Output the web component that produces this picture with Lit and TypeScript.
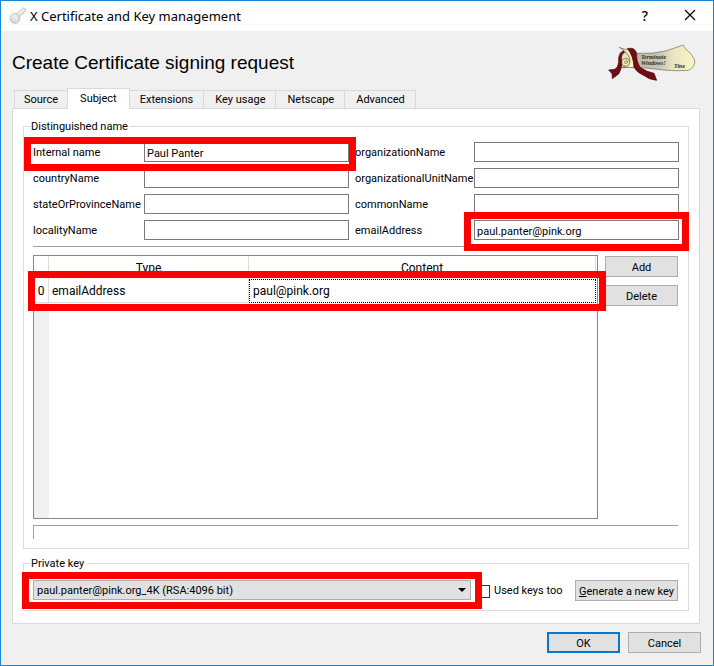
import { LitElement, html, css, svg } from "lit";
import { customElement, state } from "lit/decorators.js";
import { classMap } from "lit/directives/class-map.js";

interface NameField {
  id: string;
  label: string;
  value: string;
  marked?: boolean;
}

const LEFT: NameField[] = [
  { id: "internal", label: "Internal name", value: "Paul Panter", marked: true },
  { id: "country", label: "countryName", value: "" },
  { id: "state", label: "stateOrProvinceName", value: "" },
  { id: "locality", label: "localityName", value: "" },
];

const RIGHT: NameField[] = [
  { id: "org", label: "organizationName", value: "" },
  { id: "unit", label: "organizationalUnitName", value: "" },
  { id: "common", label: "commonName", value: "" },
  { id: "email", label: "emailAddress", value: "paul.panter@pink.org", marked: true },
];

const TABS = ["Source", "Subject", "Extensions", "Key usage", "Netscape", "Advanced"];

const keyIcon = svg`
  <svg width="18" height="18" viewBox="0 0 18 18" aria-hidden="true">
    <path d="M14.5 0.8 L17 2 L16.4 4.6 L14.8 5.2 L14.2 7 L12.4 7.6 L10 11 L6.5 7.5 Z" fill="#dedede" stroke="#c6c6c6" stroke-width="0.7"/>
    <path d="M14.8 2.4 L8.5 8.5" stroke="#f8f8f8" stroke-width="1.2"/>
    <circle cx="6" cy="11.5" r="5" fill="#d8d8d8" stroke="#bdbdbd" stroke-width="0.7"/>
    <circle cx="5.6" cy="10.4" r="3.2" fill="#ececec"/>
    <ellipse cx="4.4" cy="13.2" rx="1.7" ry="1.3" fill="#fff" stroke="#a8a8a8" stroke-width="0.6"/>
  </svg>`;

const scrollLogo = svg`
  <svg width="88" height="42" viewBox="54 126 264 126" role="img" aria-label="Certificate scroll">
    <defs>
      <linearGradient id="parchment" x1="0" y1="0" x2="1" y2="0">
        <stop offset="0" stop-color="#f4ecb8"/>
        <stop offset="0.25" stop-color="#bfbda6"/>
        <stop offset="0.5" stop-color="#c4c3b6"/>
        <stop offset="0.72" stop-color="#ebe6c0"/>
        <stop offset="1" stop-color="#fbf5c4"/>
      </linearGradient>
    </defs>
    <path d="M96 203 Q88 182 100 158 L143 160 Q190 162 226 153 Q258 143 280 135 L286 146 Q306 160 314 180 Q316 202 295 211 Q260 214 220 210 L146 202 Z" fill="url(#parchment)" stroke="#6e6a58" stroke-width="2"/>
    <path d="M88 142 Q104 150 118 148 Q134 164 134 203 L98 202 Q122 196 120 178 Q116 158 88 142 Z" fill="#fbf3bb" stroke="#6b664c" stroke-width="2"/>
    <circle cx="107" cy="187" r="12" fill="#f3ebb6" stroke="#55503b" stroke-width="2"/>
    <path d="M107 180 q7 2 5 8 q-5 6 -9 0 q0 -4 4 -4" fill="none" stroke="#55503b" stroke-width="2"/>
    <path d="M101 152 Q84 158 86 184 Q84 204 74 208 L56 210 L66 221 L67 236 L86 222 Q98 204 94 180 Q92 164 103 157 Z" fill="#730c14" stroke="#42060b" stroke-width="2"/>
    <path d="M112 146 Q134 140 140 160 Q138 184 150 202 Q170 216 192 220 L200 241 Q176 238 166 229 Q140 218 132 202 Q130 166 112 146 Z" fill="#730c14" stroke="#42060b" stroke-width="2"/>
    <g class="script">
      <text x="153" y="178">Terminate</text>
      <text x="153" y="195">Windows!</text>
      <text x="252" y="203">Tine</text>
    </g>
  </svg>`;

@customElement("app-root")
export class AppRoot extends LitElement {
  @state() private activeTab = "Subject";

  static styles = css`
    :host {
      display: block;
      font: 11px/16px Roboto, "Liberation Sans", sans-serif;
      color: #000;
    }
    * { box-sizing: border-box; }
    .dialog {
      min-height: 100vh;
      display: flex;
      flex-direction: column;
      border: 1px solid #1883d7;
      background: #f0f0f0;
    }
    .titlebar {
      display: flex;
      align-items: center;
      height: 30px;
      padding: 0 15px 0 8px;
      background: #fff;
    }
    .titlebar h1 {
      flex: 1;
      margin: 0 0 0 3px;
      font: 400 13px/20px "Noto Sans", sans-serif;
    }
    .titlebar button {
      width: 16px;
      height: 24px;
      margin-left: 29px;
      padding: 0;
      border: 0;
      background: none;
      color: inherit;
      font: 500 14px/24px "Noto Sans", sans-serif;
    }
    .header {
      display: flex;
      align-items: center;
      justify-content: space-between;
      height: 57px;
      padding: 6px 17px 0 11px;
    }
    .header h2 {
      margin: 0;
      font: 400 19px/24px "Liberation Sans", sans-serif;
    }
    .header svg { display: block; }
    .script {
      font: italic 700 18px "Liberation Serif", serif;
      fill: #2e2c28;
    }
    .tabs {
      display: flex;
      align-items: flex-end;
      padding-left: 13px;
    }
    .tab {
      height: 18px;
      padding: 1px 10px 0 11px;
      border: 1px solid #d9d9d9;
      border-width: 1px 1px 0 0;
      background: #f0f0f0;
      color: inherit;
      font: inherit;
    }
    .tab:first-child { padding-left: 9px; border-left-width: 1px; }
    .tab.active {
      position: relative;
      height: 21px;
      margin: 0 -1px -1px -2px;
      padding: 0 12px 1px;
      border-left-width: 1px;
      background: #fff;
    }
    .pane {
      flex: 1;
      display: flex;
      flex-direction: column;
      gap: 6px;
      margin: 0 13px 0 11px;
      padding: 9px 10px 12px;
      border: 1px solid #d9d9d9;
      background: #fff;
    }
    fieldset {
      min-width: 0;
      margin: 0;
      padding: 8px 9px 9px;
      border: 1px solid #dcdcdc;
    }
    legend {
      height: 16px;
      margin-left: -2px;
      padding: 1px 2px 0 0;
    }
    .fields {
      display: grid;
      grid-template-columns: 105px 1fr 113px 1fr;
      gap: 6px;
      padding-bottom: 6px;
      border-bottom: 1px solid #a0a0a0;
    }
    .pair {
      position: relative;
      display: grid;
      grid-column: span 2;
      grid-template-columns: subgrid;
      align-items: center;
    }
    label { padding-top: 2px; white-space: nowrap; }
    input[type="text"] {
      width: 100%;
      min-width: 0;
      height: 20px;
      padding: 2px 2px 0;
      border: 1px solid #7a7a7a;
      background: #fff;
      color: inherit;
      font: inherit;
    }
    .mark {
      position: absolute;
      z-index: 1;
      border: 7px solid #f00;
      pointer-events: none;
    }
    .mark.internal { inset: -5px -7px -9px -9px; }
    .mark.email { inset: -8px -10px -11px 109px; }
    .mark.row { inset: 15px -9px auto -6px; height: 40px; }
    .mark.key { inset: -8px -11px -9px; }
    .entries {
      display: flex;
      gap: 7px;
      margin: 8px 1px 6px 0;
    }
    .grid {
      position: relative;
      flex: 1;
      min-height: 264px;
      padding-right: 1px;
      border: 1px solid #828790;
      background: linear-gradient(to right, #f0f0f0 15px, #fff 15px);
    }
    table {
      width: 100%;
      border-collapse: separate;
      border-spacing: 0;
      table-layout: fixed;
      background: #fff;
      font-size: 12px;
    }
    th, td {
      height: 24px;
      padding: 0 3px;
      border: 0 solid #dcdcdc;
      border-width: 0 1px 1px 0;
      font-weight: 400;
      text-align: left;
    }
    thead th { height: 23px; border-bottom-width: 0; text-align: center; }
    th.num { width: 15px; padding: 0; text-align: center; }
    .type { width: 200px; }
    td.current { border: 1px dotted #000; }
    .side {
      display: flex;
      flex-direction: column;
      gap: 8px;
      width: 73px;
      padding-top: 1px;
    }
    .btn {
      height: 21px;
      min-width: 73px;
      padding: 2px 2px 0;
      border: 1px solid #adadad;
      background: #e1e1e1;
      color: inherit;
      font: inherit;
      white-space: nowrap;
    }
    .btn.default { border: 2px solid #0078d7; }
    .status {
      height: 14px;
      margin-right: 1px;
      border: 1px solid #a0a0a0;
      border-width: 1px 0 0 1px;
    }
    .keyrow { display: flex; align-items: flex-start; margin: 1px 1px 0 0; }
    .combo { position: relative; flex: 1; height: 20px; margin-right: 6px; }
    select {
      display: block;
      width: 100%;
      height: 20px;
      padding: 1px 20px 0 3px;
      border: 1px solid #adadad;
      border-radius: 0;
      background: #e1e1e1;
      appearance: none;
      color: inherit;
      font: inherit;
    }
    .arrow {
      position: absolute;
      top: 8px;
      right: 5px;
      pointer-events: none;
    }
    input[type="checkbox"] {
      width: 13px;
      height: 13px;
      margin: 0 4px 0 0;
      border: 1px solid #333;
      background: #fff;
      appearance: none;
    }
    .used {
      display: flex;
      align-items: center;
      width: 98px;
      height: 21px;
      padding-top: 1px;
    }
    .generate { width: 103px; }
    .footer {
      display: flex;
      justify-content: flex-end;
      gap: 8px;
      padding: 8px 12px 12px;
    }
  `;

  private field(f: NameField) {
    return html`
      <div class="pair">
        <label for=${f.id}>${f.label}</label>
        <input type="text" id=${f.id} .value=${f.value} />
        ${f.marked ? html`<div class="mark ${f.id}"></div>` : null}
      </div>`;
  }

  render() {
    return html`
      <div class="dialog">
        <div class="titlebar">
          ${keyIcon}
          <h1>X Certificate and Key management</h1>
          <button aria-label="Help">?</button>
          <button aria-label="Close">
            <svg width="12" height="12" viewBox="0 0 12 12"><path d="M1 1 L11 11 M11 1 L1 11" stroke="#000" stroke-width="1.2" /></svg>
          </button>
        </div>
        <div class="header">
          <h2>Create Certificate signing request</h2>
          ${scrollLogo}
        </div>
        <div class="tabs" role="tablist">
          ${TABS.map(
            (t) => html`<button
              role="tab"
              class=${classMap({ tab: true, active: t === this.activeTab })}
              aria-selected=${t === this.activeTab ? "true" : "false"}
              @click=${() => (this.activeTab = t)}
            >${t}</button>`
          )}
        </div>
        <div class="pane" role="tabpanel">
          <fieldset>
            <legend>Distinguished name</legend>
            <div class="fields">
              ${LEFT.map((f, i) => html`${this.field(f)}${this.field(RIGHT[i])}`)}
            </div>
            <div class="entries">
              <div class="grid">
                <table>
                  <thead>
                    <tr><th class="num"></th><th class="type">Type</th><th>Content</th></tr>
                  </thead>
                  <tbody>
                    <tr><th class="num" scope="row">0</th><td>emailAddress</td><td class="current">paul@pink.org</td></tr>
                  </tbody>
                </table>
                <div class="mark row"></div>
              </div>
              <div class="side">
                <button class="btn">Add</button>
                <button class="btn">Delete</button>
              </div>
            </div>
            <div class="status"></div>
          </fieldset>
          <fieldset>
            <legend>Private key</legend>
            <div class="keyrow">
              <div class="combo">
                <select aria-label="Private key">
                  <option>paul.panter@pink.org_4K (RSA:4096 bit)</option>
                </select>
                <svg class="arrow" width="8" height="4" viewBox="0 0 8 4"><path d="M0 0 H8 L4 4 Z" /></svg>
                <div class="mark key"></div>
              </div>
              <label class="used"><input type="checkbox" />Used keys too</label>
              <button class="btn generate"><u>G</u>enerate a new key</button>
            </div>
          </fieldset>
        </div>
        <div class="footer">
          <button class="btn default">OK</button>
          <button class="btn">Cancel</button>
        </div>
      </div>`;
  }
}
